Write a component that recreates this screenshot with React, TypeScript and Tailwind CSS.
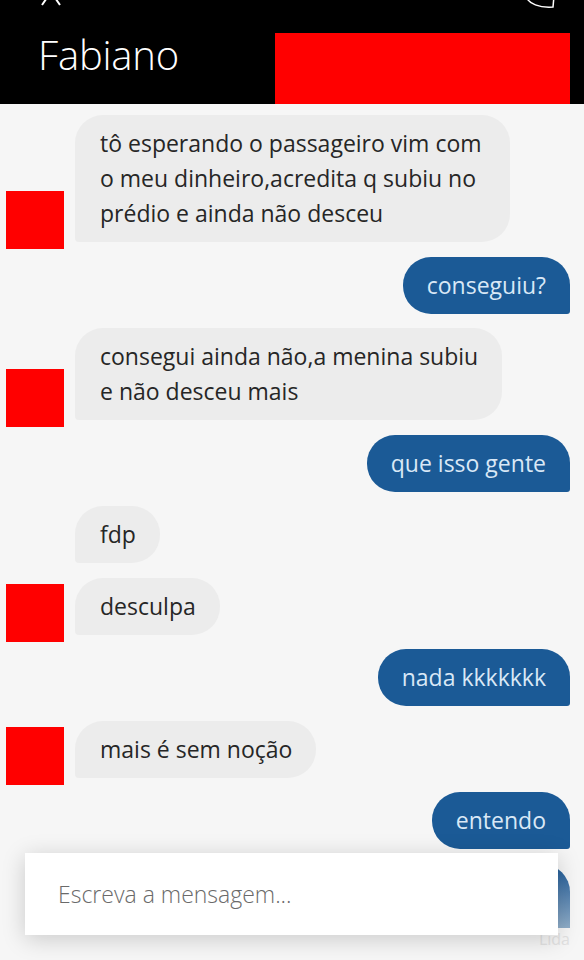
import React from "react";

const font = { fontFamily: '"Open Sans", "Noto Sans", sans-serif' };

function Avatar() {
  return <div className="w-[58px] h-[58px] bg-[#ff0000] shrink-0 -mb-[7px]" />;
}

function In({
  children,
  avatar,
  w,
}: {
  children: React.ReactNode;
  avatar?: boolean;
  w?: string;
}) {
  return (
    <div className="flex items-end pl-[6px]">
      {avatar ? <Avatar /> : <div className="w-[58px] shrink-0" />}
      <div
        className={`ml-[11px] bg-[#ececec] text-[#262626] rounded-[28px] rounded-bl-[4px] pl-[25px] pr-[24px] py-[11px] text-[23px] leading-[35px] whitespace-nowrap ${w ?? ""}`}
      >
        {children}
      </div>
    </div>
  );
}

function Out({ children }: { children: React.ReactNode }) {
  return (
    <div className="flex justify-end pr-[14px]">
      <div className="bg-[#1b5a96] text-[#d9e8f6] rounded-[28px] rounded-br-[3px] px-[24px] py-[11px] text-[23px] leading-[35px] whitespace-nowrap">
        {children}
      </div>
    </div>
  );
}

export default function App() {
  return (
    <div className="w-[584px] h-[960px] overflow-hidden bg-[#f6f6f6] relative" style={font}>
      {/* header */}
      <div className="h-[104px] bg-black relative flex">
        <svg className="absolute left-[36px] top-0" width="30" height="8" viewBox="0 0 30 8">
          <path d="M15 -8 L6 5 M15 -8 L24 5" stroke="#fff" strokeWidth="2" fill="none" />
        </svg>
        <svg className="absolute left-[520px] top-0" width="40" height="10" viewBox="0 0 40 10">
          <path d="M6 -4 C8 4 20 8 33 7 L34 -4" stroke="#fff" strokeWidth="1.5" fill="none" />
        </svg>
        <div className="pl-[38px] pt-[29px] text-white text-[40px] font-light leading-[52px] tracking-[-0.2px]">
          Fabiano
        </div>
        <div className="absolute left-[275px] top-[33px] w-[295px] h-[71px] bg-[#ff0000]" />
      </div>

      {/* messages */}
      <div className="flex flex-col gap-[14.5px] pt-[11px]">
        <In avatar w="w-[435px]">
          tô esperando o passageiro vim com
          <br />o meu dinheiro,acredita q subiu no
          <br />prédio e ainda não desceu
        </In>
        <Out>conseguiu?</Out>
        <In avatar w="w-[427px]">
          consegui ainda não,a menina subiu
          <br />e não desceu mais
        </In>
        <Out>que isso gente</Out>
        <In>fdp</In>
        <In avatar>desculpa</In>
        <Out>nada kkkkkkk</Out>
        <In avatar>mais é sem noção</In>
        <Out>entendo</Out>
        <div className="flex justify-end pr-[14px]">
          <div className="w-[120px] h-[64px] rounded-tr-[28px] rounded-tl-[28px] bg-gradient-to-b from-[#1b5a96] to-[#8fadc8]" />
        </div>
        <div className="flex justify-end pr-[14px] -mt-[12px] text-[16px] leading-[18px] text-[#e2e2e2]">
          Lida
        </div>
      </div>

      {/* input overlay */}
      <div className="absolute left-[25px] top-[853px] w-[533px] h-[82px] bg-white shadow-[0_4px_22px_rgba(0,0,0,0.18)] flex items-center pl-[33px]">
        <span className="text-[23px] text-[#6a6a6a] font-light">Escreva a mensagem...</span>
      </div>
    </div>
  );
}
